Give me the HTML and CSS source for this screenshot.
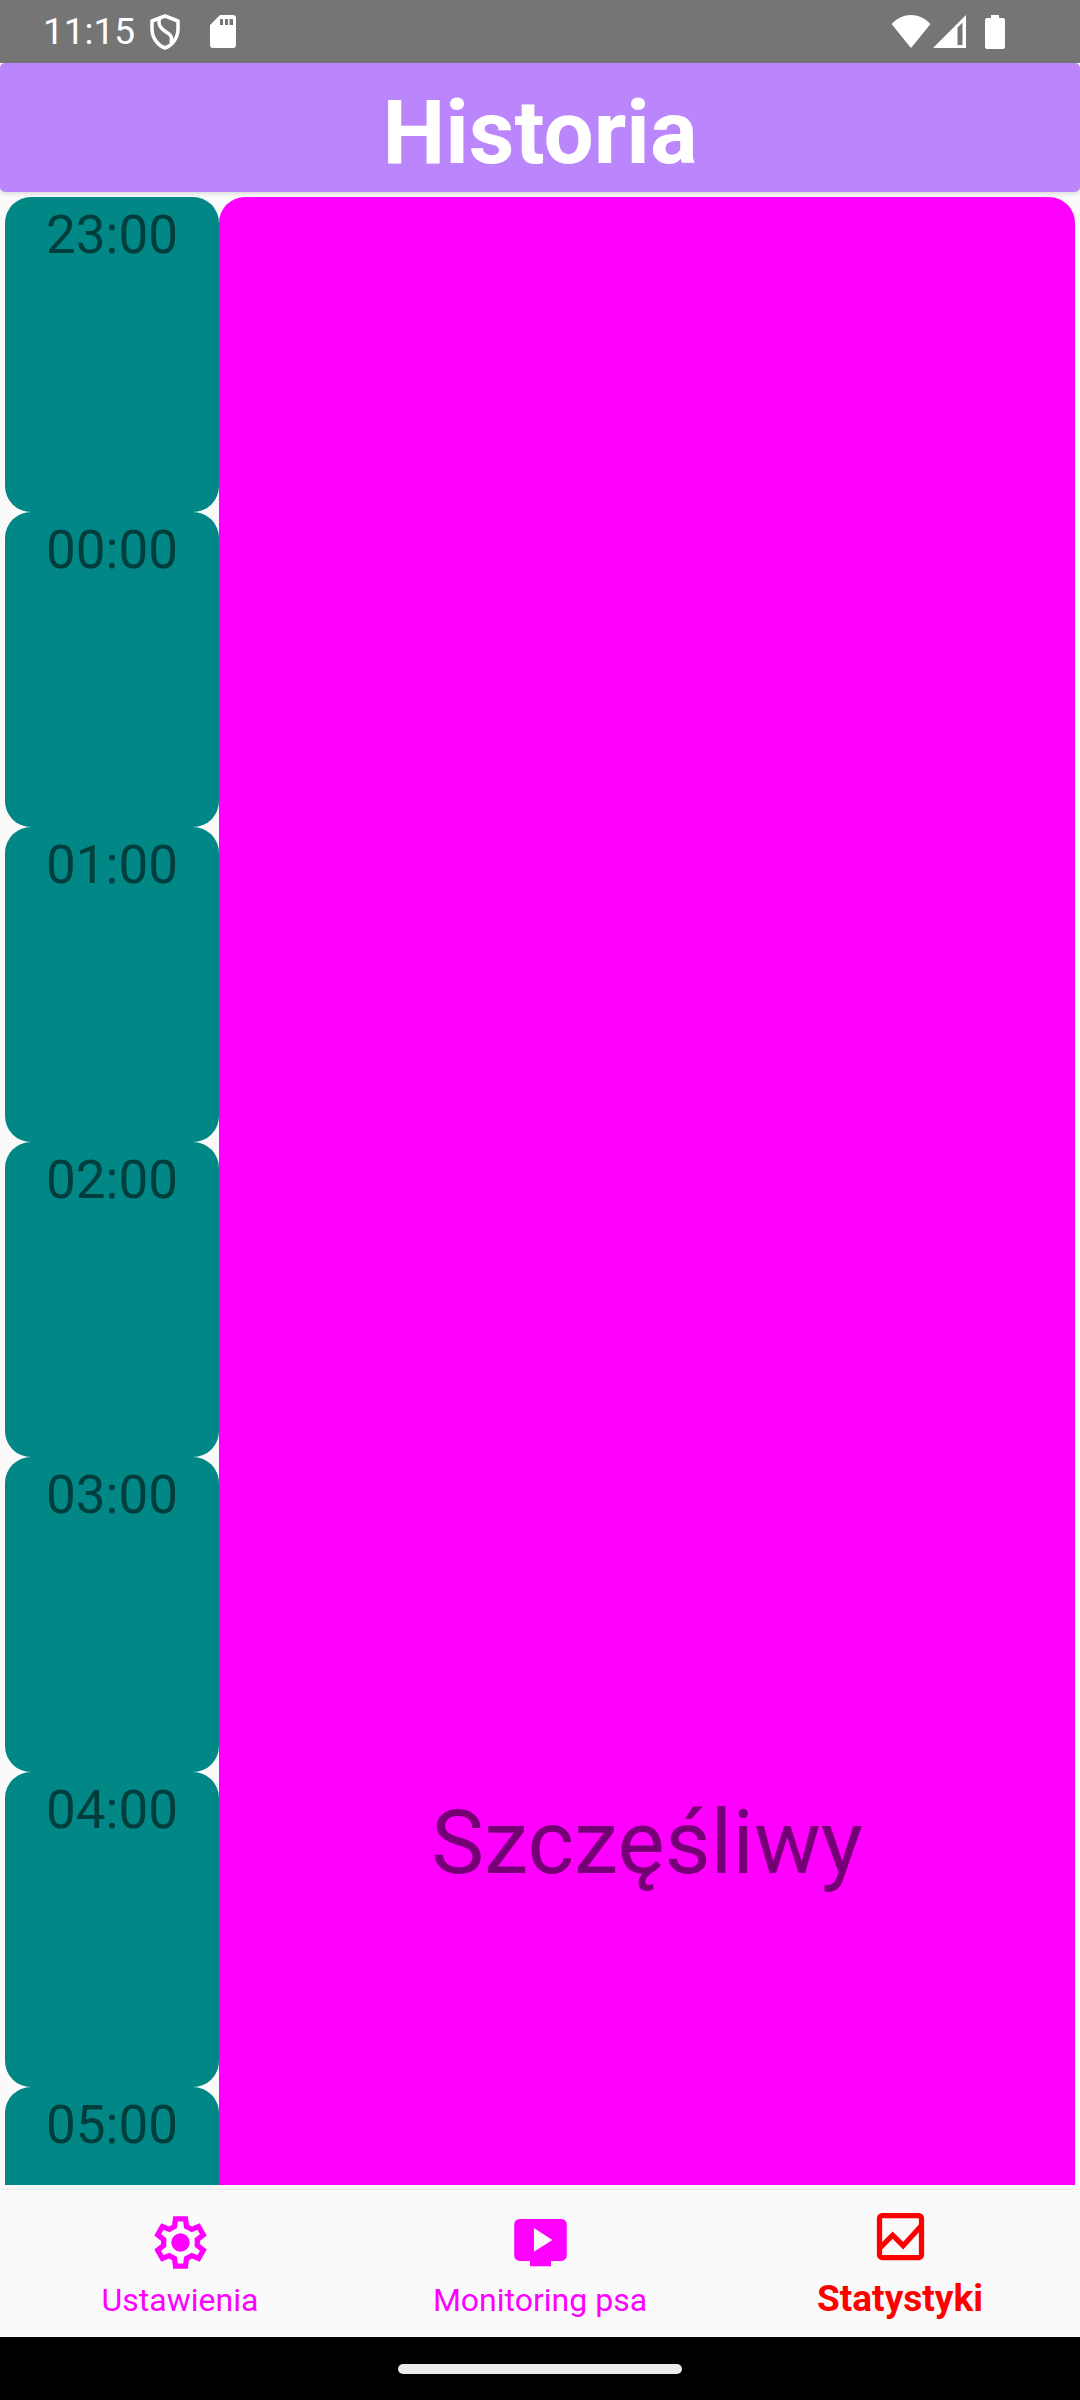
FILE: index.html
```html
<!DOCTYPE html>
<html lang="pl">
<head>
<meta charset="utf-8">
<meta name="viewport" content="width=device-width, initial-scale=1">
<title>Historia</title>
<link rel="stylesheet" href="styles.css">
</head>
<body>
<div class="app">
  <div class="status-bar">
    <div class="status-left">
      <time class="clock">11:15</time>
      <svg class="shield" width="30" height="36" viewBox="0 0 30 36" aria-hidden="true">
        <path d="M15 2 28 7V15C28 24 22 31.500 15 34 8 31.500 2 24 2 15V7Z" fill="none" stroke="#fff" stroke-width="3.500" stroke-linejoin="round"/>
        <path d="M9.500 4C8 10 9.500 13 14 16.500S23.500 21 21 29" fill="none" stroke="#fff" stroke-width="3.500"/>
      </svg>
      <svg class="card" width="26" height="33" viewBox="0 0 26 33" aria-hidden="true">
        <path fill="#fff" fill-rule="evenodd" d="M10 0H23a3 3 0 0 1 3 3V30a3 3 0 0 1-3 3H3a3 3 0 0 1-3-3V10ZM10 4V10H13V4ZM15 4V10H18V4ZM19.500 4V10H23V4Z"/>
      </svg>
    </div>
    <div class="status-right">
      <svg width="40" height="33" viewBox="0 0 40 33" aria-hidden="true">
        <path fill="#fff" d="M0.500 9C12-3 28-3 39.500 9L20 33Z"/>
      </svg>
      <svg class="signal" width="33" height="33" viewBox="0 0 33 33" aria-hidden="true">
        <path fill="#fff" fill-rule="evenodd" d="M33 0V33H0ZM24.500 12.500V30H29.500V7.500Z"/>
      </svg>
      <svg class="battery" width="20" height="34" viewBox="0 0 20 34" aria-hidden="true">
        <path fill="#fff" d="M6 0H14V3H18a2 2 0 0 1 2 2V32a2 2 0 0 1-2 2H2a2 2 0 0 1-2-2V5a2 2 0 0 1 2-2H6Z"/>
      </svg>
    </div>
  </div>

  <header class="title-bar"><h1>Historia</h1></header>

  <main class="timeline">
    <ol class="hours">
      <li>23:00</li>
      <li>00:00</li>
      <li>01:00</li>
      <li>02:00</li>
      <li>03:00</li>
      <li>04:00</li>
      <li>05:00</li>
    </ol>
    <section class="mood"><p>Szczęśliwy</p></section>
  </main>

  <nav class="tabs">
    <a class="tab" href="#ustawienia">
      <svg width="63" height="63" viewBox="0 0 24 24" aria-hidden="true">
        <path fill="none" stroke="currentColor" stroke-width="2" d="M10.100 3H13.900L14.300 5.900 16.300 7 18.900 5.900 20.700 9.100 18.400 10.900V13.100L20.700 14.900 18.900 18.100 16.300 17 14.300 18.100 13.900 21H10.100L9.700 18.100 7.700 17 5.100 18.100 3.300 14.900 5.600 13.100V10.900L3.300 9.100 5.100 5.900 7.700 7 9.700 5.900Z"/>
        <circle cx="12" cy="12" r="3.500" fill="currentColor"/>
      </svg>
      <span>Ustawienia</span>
    </a>
    <a class="tab" href="#monitoring">
      <svg width="63" height="63" viewBox="0 0 24 24" aria-hidden="true">
        <path fill="currentColor" fill-rule="evenodd" d="M4 3H20a2 2 0 0 1 2 2V17a2 2 0 0 1-2 2H16V21H8V19H4a2 2 0 0 1-2-2V5a2 2 0 0 1 2-2ZM9.500 6.500V15.500L16.500 11Z"/>
      </svg>
      <span>Monitoring psa</span>
    </a>
    <a class="tab active" href="#statystyki" aria-current="page">
      <svg width="63" height="63" viewBox="0 0 24 24" aria-hidden="true">
        <rect x="4" y="4" width="16" height="16" rx="1" fill="none" stroke="currentColor" stroke-width="2"/>
        <path fill="none" stroke="currentColor" stroke-width="2" d="M4 16.500 9 11.500 13 15.500 20 7.800"/>
      </svg>
      <span>Statystyki</span>
    </a>
  </nav>

  <div class="gesture-bar"><div class="handle"></div></div>
</div>
</body>
</html>
```
FILE: styles.css
```css
* {
  box-sizing: border-box;
}

body {
  margin: 0;
  background: #fafafa;
  font-family: Roboto, "Noto Sans", sans-serif;
}

.app {
  display: flex;
  flex-direction: column;
  height: 100vh;
}

.status-bar {
  display: flex;
  flex: none;
  align-items: center;
  justify-content: space-between;
  height: 63px;
  padding: 0 75px 0 43px;
  background: #757575;
  color: #fff;
}

.status-left,
.status-right {
  display: flex;
  align-items: center;
}

.clock {
  margin-right: 15px;
  font-size: 37px;
  line-height: 44px;
}

.shield {
  margin-right: 30px;
}

.signal {
  margin: 0 19px 0 2px;
}

.title-bar {
  flex: none;
  padding: 17px 0 7px;
  border-radius: 5px;
  background: #bb86fc;
  box-shadow: 0 2px 4px rgba(0, 0, 0, 0.12);
  color: #fff;
  text-align: center;
}

.title-bar h1 {
  margin: 0;
  font-size: 89px;
  font-weight: 700;
  line-height: 105px;
}

.timeline {
  display: flex;
  flex: 1;
  min-height: 0;
  margin: 5px;
  overflow: hidden;
}

.hours {
  flex: 1;
  margin: 0;
  padding: 0;
  list-style: none;
}

.hours li {
  height: 315px;
  padding-top: 7px;
  border-radius: 26px;
  background: #018786;
  color: rgba(0, 0, 0, 0.54);
  font-size: 53px;
  line-height: 62px;
  text-align: center;
}

.mood {
  flex: 4;
  height: 3280px;
  border-radius: 26px;
  background: #f0f;
  color: rgba(0, 0, 0, 0.54);
  font-size: 89px;
  line-height: 105px;
  text-align: center;
}

.mood p {
  margin: 0;
  padding-top: 1593px;
}

.tabs {
  display: grid;
  flex: none;
  grid-template-columns: repeat(3, 1fr);
  height: 147px;
  box-shadow: 0 -1px 3px rgba(0, 0, 0, 0.08);
}

.tab {
  display: flex;
  flex-direction: column;
  align-items: center;
  padding-top: 21px;
  color: #f0f;
  font-size: 32px;
  line-height: 38px;
  text-decoration: none;
}

.tab span {
  margin-top: 7px;
}

.tab.active {
  padding-top: 15px;
  color: #f00;
  font-size: 37px;
  font-weight: 700;
  line-height: 48px;
}

.gesture-bar {
  display: flex;
  flex: none;
  align-items: center;
  justify-content: center;
  height: 63px;
  background: #000;
}

.handle {
  width: 284px;
  height: 10px;
  border-radius: 5px;
  background: #ebebeb;
}
```
